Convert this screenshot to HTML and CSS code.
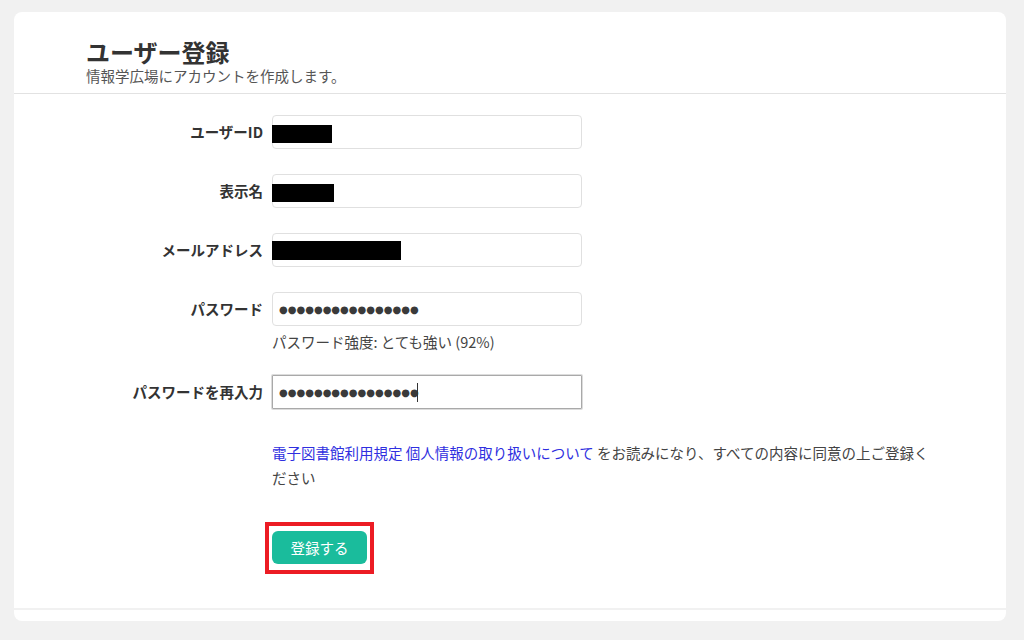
FILE: index.html
```html
<!DOCTYPE html>
<html lang="ja">
<head>
    <meta charset="UTF-8">
    <title>ユーザー登録</title>
    <link rel="stylesheet" href="styles.css">
</head>
<body>
    <div class="card">
        <div class="card-header">
            <h1>ユーザー登録</h1>
            <p class="lead">情報学広場にアカウントを作成します。</p>
        </div>
        <form class="card-body">
            <div class="form-row">
                <label for="userid">ユーザーID</label>
                <div class="field">
                    <input type="text" id="userid" value="">
                    <span class="redact" style="top: 10px; width: 60px; height: 18px;"></span>
                </div>
            </div>
            <div class="form-row">
                <label for="name">表示名</label>
                <div class="field">
                    <input type="text" id="name" value="">
                    <span class="redact" style="top: 10px; width: 62px; height: 18px;"></span>
                </div>
            </div>
            <div class="form-row">
                <label for="mail">メールアドレス</label>
                <div class="field">
                    <input type="text" id="mail" value="">
                    <span class="redact" style="top: 8px; width: 129px; height: 19px;"></span>
                </div>
            </div>
            <div class="form-row">
                <label for="pass">パスワード</label>
                <div class="field">
                    <input type="text" id="pass" class="masked" value="●●●●●●●●●●●●●●●●">
                    <p class="help">パスワード強度: とても強い (92%)</p>
                </div>
            </div>
            <div class="form-row">
                <label for="pass2">パスワードを再入力</label>
                <div class="field">
                    <input type="text" id="pass2" class="masked focused" value="●●●●●●●●●●●●●●●●">
                    <span class="caret"></span>
                </div>
            </div>
            <div class="offset">
                <p class="agree"><a href="#">電子図書館利用規定</a> <a href="#">個人情報の取り扱いについて</a> をお読みになり、すべての内容に同意の上ご登録ください</p>
                <span class="mark"><button type="button" class="btn">登録する</button></span>
            </div>
        </form>
        <div class="card-footer"></div>
    </div>
</body>
</html>
```

FILE: styles.css
```css
body {
    margin: 0;
    background-color: #f1f1f1;
    font-family: "Noto Sans CJK JP", "Liberation Sans", sans-serif;
    color: #333;
}
.card {
    width: 992px;
    margin: 12px 0 0 14px;
    background-color: #fff;
    border-radius: 8px;
}
.card-header {
    padding: 25px 72px 8px;
    border-bottom: 1px solid #e2e2e2;
}
h1 {
    margin: 0;
    font-size: 24px;
    line-height: 30px;
    font-weight: bold;
    color: #333;
}
.lead {
    margin: 0;
    font-size: 14.5px;
    line-height: 18px;
    color: #555;
}
.card-body {
    padding: 21px 0 34px;
}
.form-row {
    display: grid;
    grid-template-columns: 249px 310px;
    column-gap: 9px;
    margin-bottom: 25px;
}
.form-row label {
    text-align: right;
    font-size: 14.5px;
    font-weight: bold;
    line-height: 34px;
    white-space: nowrap;
}
.field {
    position: relative;
}
.field input {
    display: block;
    width: 100%;
    height: 34px;
    box-sizing: border-box;
    padding: 0 6px;
    border: 1px solid #e0e0e0;
    border-radius: 4px;
    font-family: inherit;
    font-size: 14px;
    color: #333;
    outline: none;
}
.field input.masked {
    font-family: "DejaVu Sans", sans-serif;
    font-size: 10px;
    color: #3a3a3a;
}
.field input.focused {
    border-color: #a9a9a9;
    border-radius: 1px;
    box-shadow: 0 0 0 1px #dcdcdc;
}
.redact {
    position: absolute;
    left: 0;
    background-color: #000;
}
.caret {
    position: absolute;
    left: 145px;
    top: 8px;
    width: 1px;
    height: 19px;
    background-color: #333;
}
.help {
    margin: 6px 0 -2px;
    font-size: 14.5px;
    line-height: 20px;
    color: #444;
}
.offset {
    margin-left: 258px;
    padding-top: 6px;
}
.agree {
    width: 665px;
    margin: 0 0 32px;
    font-size: 14.5px;
    line-height: 25px;
    color: #444;
}
.agree a {
    color: #2f2fe0;
    text-decoration: none;
}
.mark {
    display: inline-block;
    margin-left: -7px;
    padding: 5px 3px 6px;
    border: 4px solid #ec1c24;
}
.btn {
    display: block;
    width: 95px;
    height: 33px;
    border: none;
    border-radius: 6px;
    background-color: #1abc9c;
    color: #fff;
    font-family: inherit;
    font-size: 14.5px;
    cursor: pointer;
}
.card-footer {
    height: 11px;
    border-top: 2px solid #f1f1f1;
    border-radius: 0 0 8px 8px;
}
```
